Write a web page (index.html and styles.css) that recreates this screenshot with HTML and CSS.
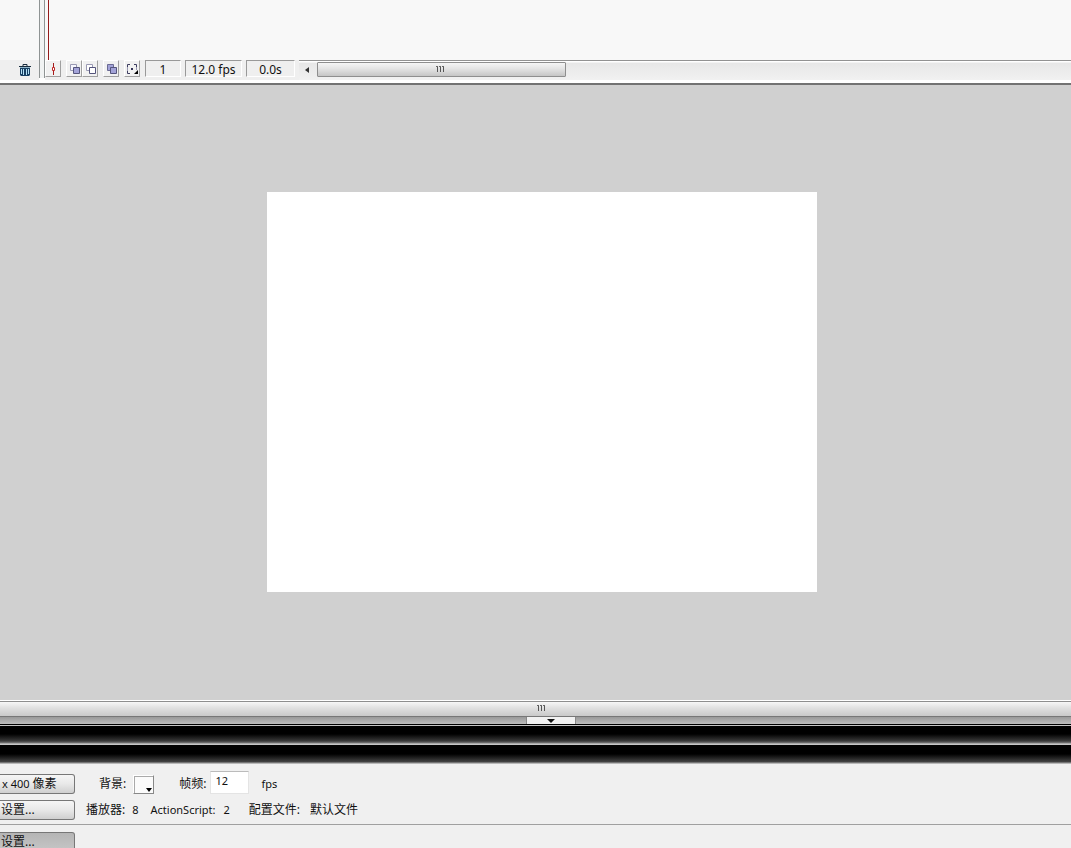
FILE: index.html
```html
<!DOCTYPE html>
<html lang="zh-CN">
<head>
<meta charset="utf-8">
<title>Flash</title>
<link rel="stylesheet" href="styles.css">
</head>
<body>
<div class="app">
  <section class="timeline">
    <div class="layers">
      <div class="layer-list"></div>
      <div class="layer-tools">
        <button class="plain" aria-label="删除图层">
          <svg width="12" height="12" viewBox="0 0 12 12"><path d="M1 4h10v7l-1 1H2l-1-1z" fill="#173f62"/><path d="M2.500 5v5M4.500 5v6M7.500 5v6M9.500 5v5" stroke="#b4e0f5"/><path d="M0 2.500h12M4 2V.5h4V2" fill="none" stroke="#172b3c"/><path d="M1 3.500h10" stroke="#8fb4c8"/></svg>
        </button>
      </div>
    </div>
    <div class="splitter"></div>
    <div class="frames">
      <div class="frame-grid"><div class="playhead"></div></div>
      <div class="frame-tools">
        <button class="tool" aria-label="滚动到播放头"><svg width="16" height="16" viewBox="0 0 16 16"><path d="M8.500 2v4M8.500 10v4" stroke="#a51c1c"/><path d="M7.500 6.500h2v3h-2z" fill="#fff" stroke="#c02828"/></svg></button>
        <div class="tool-pair">
          <button class="tool" aria-label="绘图纸外观"><svg width="16" height="16" viewBox="0 0 16 16"><path d="M4.500 3.500h6v6h-6z" fill="#f8f8ff" stroke="#9a9ab4"/><path d="M7.500 6.500h6v6h-6z" fill="#a3a3d8" stroke="#55557c"/></svg></button>
          <button class="tool" aria-label="绘图纸外观轮廓"><svg width="16" height="16" viewBox="0 0 16 16"><path d="M4.500 3.500h6v6h-6z" fill="#fff" stroke="#9a9ab4"/><path d="M7.500 6.500h6v6h-6z" fill="#fff" stroke="#55557c"/></svg></button>
        </div>
        <button class="tool" aria-label="编辑多个帧"><svg width="16" height="16" viewBox="0 0 16 16"><path d="M4.500 3.500h6v6h-6z" fill="#a3a3d8" stroke="#6a6a94"/><path d="M7.500 6.500h6v6h-6z" fill="#a3a3d8" stroke="#55557c"/></svg></button>
        <button class="tool" aria-label="修改绘图纸标记"><svg width="16" height="16" viewBox="0 0 16 16"><path d="M6 3.500H3.500V6M3.500 10v2.500H6M10 3.500h2.500V6" fill="none" stroke="#3c3c60"/><path d="M3.500 6v4M12.500 6v3" stroke="#9a9ab4"/><path d="M7 7h2v2H7z" fill="#333358"/><path d="M10 13h4V9z" fill="#000"/></svg></button>
        <div class="readouts">
          <span class="cell cell-frame">1</span>
          <span class="cell cell-rate">12.0 fps</span>
          <span class="cell cell-time">0.0s</span>
        </div>
        <div class="scroll">
          <button class="plain scroll-left" aria-label="向左滚动"><svg width="4" height="6" viewBox="0 0 4 6"><path d="M4 0v6L0 3z" fill="#333"/></svg></button>
          <div class="thumb"><svg width="9" height="6" viewBox="0 0 9 6"><path d="M1.500 0v6M4.500 0v6M7.500 0v6" stroke="#555"/><path d="M0 .5h2M3 .5h2M6 .5h2" stroke="#666"/></svg></div>
        </div>
      </div>
    </div>
  </section>

  <main class="workspace"><div class="stage"></div></main>

  <div class="stage-scroll"><svg width="9" height="6" viewBox="0 0 9 6"><path d="M1.500 0v6M4.500 0v6M7.500 0v6" stroke="#555"/><path d="M0 .5h2M3 .5h2M6 .5h2" stroke="#666"/></svg></div>
  <div class="dock">
    <button class="dock-tab" aria-label="折叠面板"><svg width="8" height="4" viewBox="0 0 8 4"><path d="M0 0h8L4 4z" fill="#111"/></svg></button>
  </div>
  <div class="panel-bar"></div>
  <div class="panel-bar"></div>

  <section class="properties">
    <div class="row">
      <button class="btn">x 400 <span class="label">像素</span></button>
      <span class="label label-bg">背景:</span>
      <button class="swatch" aria-label="背景颜色"><svg width="6" height="4" viewBox="0 0 6 4"><path d="M0 0h6L3 4z" fill="#000"/></svg></button>
      <label class="label label-rate" for="rate">帧频:</label>
      <input class="rate" id="rate" type="text" value="12">
      <span class="fps">fps</span>
    </div>
    <div class="row">
      <button class="btn btn-set">设置...</button>
      <span class="label label-player">播放器:</span>
      <span class="player">8</span>
      <span class="script">ActionScript:</span>
      <span class="script-version">2</span>
      <span class="label profile">配置文件:</span>
      <span class="label">默认文件</span>
    </div>
    <div class="row row-last">
      <button class="btn btn-set btn-dark">设置...</button>
    </div>
  </section>
</div>
</body>
</html>
```
FILE: styles.css
```css
* { box-sizing: border-box; }
body {
  margin: 0;
  background: #f0f0f0;
  color: #111;
  font: 11px/16px "Noto Sans", "Noto Sans CJK SC", sans-serif;
}
button, input { font: inherit; color: inherit; margin: 0; padding: 0; }
svg { display: block; }
.app { height: 100vh; display: flex; flex-direction: column; overflow: hidden; }

.timeline {
  flex: none;
  display: flex;
  height: 85px;
  background: #fff;
  border-bottom: 2px solid #727272;
}
.layers { width: 39px; display: flex; flex-direction: column; }
.layer-list, .frame-grid { height: 60px; background: #f8f8f8; }
.layer-tools {
  height: 20px;
  padding: 4px 8px 0 0;
  display: flex;
  justify-content: flex-end;
  align-items: flex-start;
  background: #efefef;
}
.plain { border: 0; background: none; }
.splitter {
  width: 6px;
  height: 78px;
  background: #f1f3f3;
  border-left: 1px solid #8f9494;
  border-right: 1px solid #8f9494;
}
.frames { flex: 1; min-width: 0; }
.frame-grid { padding-left: 3px; }
.playhead { width: 1px; height: 60px; background: #941a1a; }
.frame-tools { display: flex; height: 20px; background: #efefef; }
.tool {
  width: 16px;
  height: 17px;
  border: 1px solid #fff;
  border-right-color: #a0a0a0;
  border-bottom-color: #a0a0a0;
  background: #f1f1f1;
  margin-right: 5px;
}
.tool svg { margin-left: -1px; }
.tool-pair { display: flex; margin-right: 5px; }
.tool-pair .tool { margin-right: 0; }
.readouts { display: flex; gap: 4px; }
.cell {
  height: 17px;
  border: 1px solid #fff;
  border-top-color: #999;
  border-left-color: #999;
  font-size: 12px;
  line-height: 17px;
  text-align: center;
  white-space: nowrap;
}
.cell-frame { width: 36px; }
.cell-rate { width: 57px; }
.cell-time { width: 49px; }
.scroll {
  flex: 1;
  display: flex;
  margin-left: 4px;
  height: 20px;
  border-top: 1px solid #929292;
  background: linear-gradient(#fff 0, #fff 1px, #e7e7e7 2px, #f1f1f1);
}
.scroll-left { width: 18px; height: 17px; padding-right: 2px; display: flex; align-items: center; justify-content: center; }
.thumb {
  width: 249px;
  height: 15px;
  padding: 0 2px 2px 0;
  margin-top: 1px;
  border: 1px solid #8e8e8e;
  border-radius: 1px;
  background: linear-gradient(#f5f5f5, #e3e3e3 45%, #c5c5c5);
  display: flex;
  align-items: center;
  justify-content: center;
}

.workspace {
  flex: 1;
  min-height: 0;
  display: flex;
  align-items: center;
  justify-content: center;
  background: #d0d0d0;
  padding: 0 0 2px 12px;
}
.stage { width: 550px; height: 400px; background: #fff; }

.stage-scroll {
  flex: none;
  height: 17px;
  padding: 4px 0 0 12px;
  display: flex;
  justify-content: center;
  align-items: flex-start;
  border-top: 1px solid #fff;
  border-bottom: 1px solid #777;
  background: linear-gradient(#8e8e8e 0, #8e8e8e 1px, #f7f7f7 1px, #e1e1e1 45%, #c9c9c9);
}
.dock {
  flex: none;
  height: 8px;
  display: flex;
  justify-content: center;
  padding-left: 31px;
  background: linear-gradient(#999, #bdbdbd 7px, #000 7px);
}
.dock-tab {
  width: 50px;
  height: 7px;
  border: 1px solid #888;
  border-width: 0 1px;
  background: #f1f1f1;
  display: flex;
  align-items: center;
  justify-content: center;
}
.panel-bar {
  flex: none;
  height: 19px;
  border-top: 1px solid #c5c5c5;
  background: linear-gradient(#000 0, #000 8px, #393939 15px, #777 17px, #a5a5a5 17px);
}
.panel-bar + .panel-bar {
  height: 20px;
  background: linear-gradient(#000 0, #000 9px, #454545 17px, #a5a5a5 18px, #ccc);
}

.properties { flex: none; height: 84px; padding-top: 7px; background: #f0f0f0; }
.row { display: flex; align-items: center; height: 26px; white-space: nowrap; }
.btn {
  width: 75px;
  height: 20px;
  padding-left: 2px;
  border: 1px solid #777;
  border-left: 0;
  border-radius: 0 3px 3px 0;
  background: linear-gradient(#f6f6f6, #e8e8e8 50%, #cfcfcf);
  text-align: left;
  line-height: 18px;
}
.btn-set { padding-left: 1px; font-size: 12px; }
.btn-dark { background: linear-gradient(#b5b5b5, #c6c6c6); }
.label { font-size: 12px; }
.label-bg { margin-left: 24px; }
.swatch {
  width: 21px;
  height: 19px;
  margin-left: 7px;
  padding: 0 1px 1px 0;
  border: 1px solid #fff;
  border-right-color: #888;
  border-bottom-color: #888;
  background: #fbfbfb;
  box-shadow: inset 1px 1px #aaa;
  display: flex;
  align-items: flex-end;
  justify-content: flex-end;
}
.label-rate { margin-left: 25px; }
.rate {
  width: 39px;
  height: 23px;
  margin: 0 0 4px 4px;
  padding: 0 0 3px 4px;
  border: 1px solid #e4e4e4;
  border-top-color: #bbb;
  background: #fff;
}
.fps { margin-left: 12px; }
.label-player { margin-left: 11px; }
.player { margin-left: 7px; }
.script { margin-left: 12px; }
.script-version { margin-left: 8px; }
.profile { margin: 0 10px 0 19px; }
.row-last {
  margin-top: 1px;
  height: 24px;
  padding-top: 7px;
  align-items: flex-start;
  border-top: 1px solid #a0a0a0;
}
```
